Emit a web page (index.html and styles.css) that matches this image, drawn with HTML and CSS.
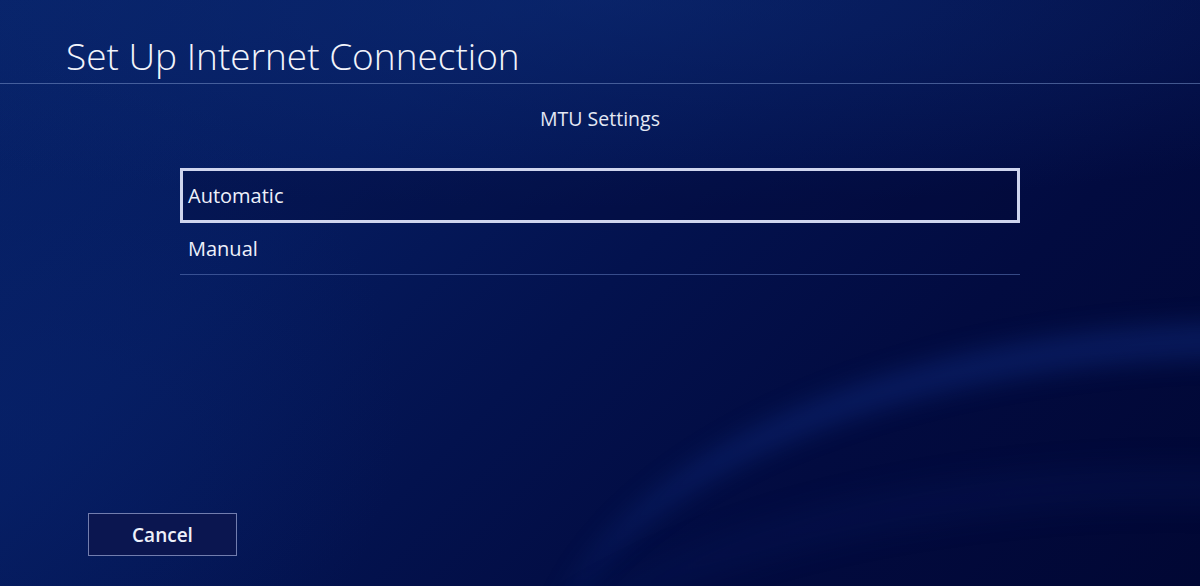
FILE: index.html
```html
<!DOCTYPE html>
<html lang="en">
<head>
<meta charset="utf-8">
<title>Set Up Internet Connection</title>
<link rel="stylesheet" href="styles.css">
</head>
<body>
<div class="screen">
  <div class="swoosh"></div>
  <div class="swoosh-low"></div>
  <header class="header">
    <h1 class="title">Set Up Internet Connection</h1>
  </header>
  <main class="content">
    <h2 class="subtitle">MTU Settings</h2>
    <ul class="options">
      <li class="option selected">Automatic</li>
      <li class="option">Manual</li>
    </ul>
  </main>
  <footer class="footer">
    <button class="btn">Cancel</button>
  </footer>
</div>
</body>
</html>
```
FILE: styles.css
```css
html, body {
  margin: 0;
  padding: 0;
  height: 100%;
}
body {
  font-family: "Open Sans", "Noto Sans", "Liberation Sans", sans-serif;
  color: #eef1fa;
  overflow: hidden;
}
.screen {
  position: relative;
  height: 586px;
  display: flex;
  flex-direction: column;
  overflow: hidden;
  background:
    radial-gradient(ellipse 1300px 260px at 50% 0%, rgba(14, 46, 120, 0.5), rgba(14, 46, 120, 0) 80%),
    radial-gradient(ellipse 500px 450px at 0% 70%, rgba(8, 36, 110, 0.45), rgba(8, 36, 110, 0) 80%),
    linear-gradient(135deg, #072268 0%, #051b5e 28%, #03124e 50%, #020b40 72%, #010734 100%);
}
.swoosh {
  position: absolute;
  left: 540px;
  top: 322px;
  width: 1420px;
  height: 720px;
  border-radius: 50%;
  border-top: 36px solid rgba(22, 62, 165, 0.3);
  filter: blur(12px);
  pointer-events: none;
}
.swoosh-low {
  position: absolute;
  left: 420px;
  top: 470px;
  width: 1500px;
  height: 700px;
  border-radius: 50%;
  border-top: 30px solid rgba(18, 40, 120, 0.18);
  filter: blur(16px);
  pointer-events: none;
}
.header {
  position: relative;
  height: 84px;
  box-sizing: border-box;
  border-bottom: 1px solid rgba(120, 145, 200, 0.55);
  padding: 31px 0 0 66px;
}
.title {
  margin: 0;
  font-size: 37px;
  font-weight: 300;
  line-height: 50px;
  color: #f2f4fb;
}
.content {
  position: relative;
  display: flex;
  flex-direction: column;
  align-items: center;
}
.subtitle {
  margin: 20px 0 0 0;
  font-size: 19.5px;
  font-weight: 400;
  line-height: 30px;
  color: #e4e8f4;
}
.options {
  list-style: none;
  margin: 34px 0 0 0;
  padding: 0;
  width: 840px;
}
.option {
  height: 53px;
  box-sizing: border-box;
  display: flex;
  align-items: center;
  padding-left: 8px;
  font-size: 20px;
  font-weight: 400;
  color: #eef1fa;
  border-bottom: 1px solid rgba(90, 115, 180, 0.6);
}
.option.selected {
  height: 55px;
  border: 3px solid #cfd5ee;
  padding-left: 5px;
  background: rgba(2, 8, 50, 0.3);
  margin-bottom: -1px;
}
.footer {
  position: relative;
  margin-top: auto;
  padding: 0 0 30px 88px;
}
.btn {
  width: 149px;
  height: 43px;
  box-sizing: border-box;
  background: #0b1650;
  border: 1px solid rgba(150, 160, 205, 0.75);
  color: #eef1fa;
  font-family: "Open Sans", "Noto Sans", "Liberation Sans", sans-serif;
  font-size: 19px;
  font-weight: 600;
  padding: 0;
  cursor: pointer;
}
```
